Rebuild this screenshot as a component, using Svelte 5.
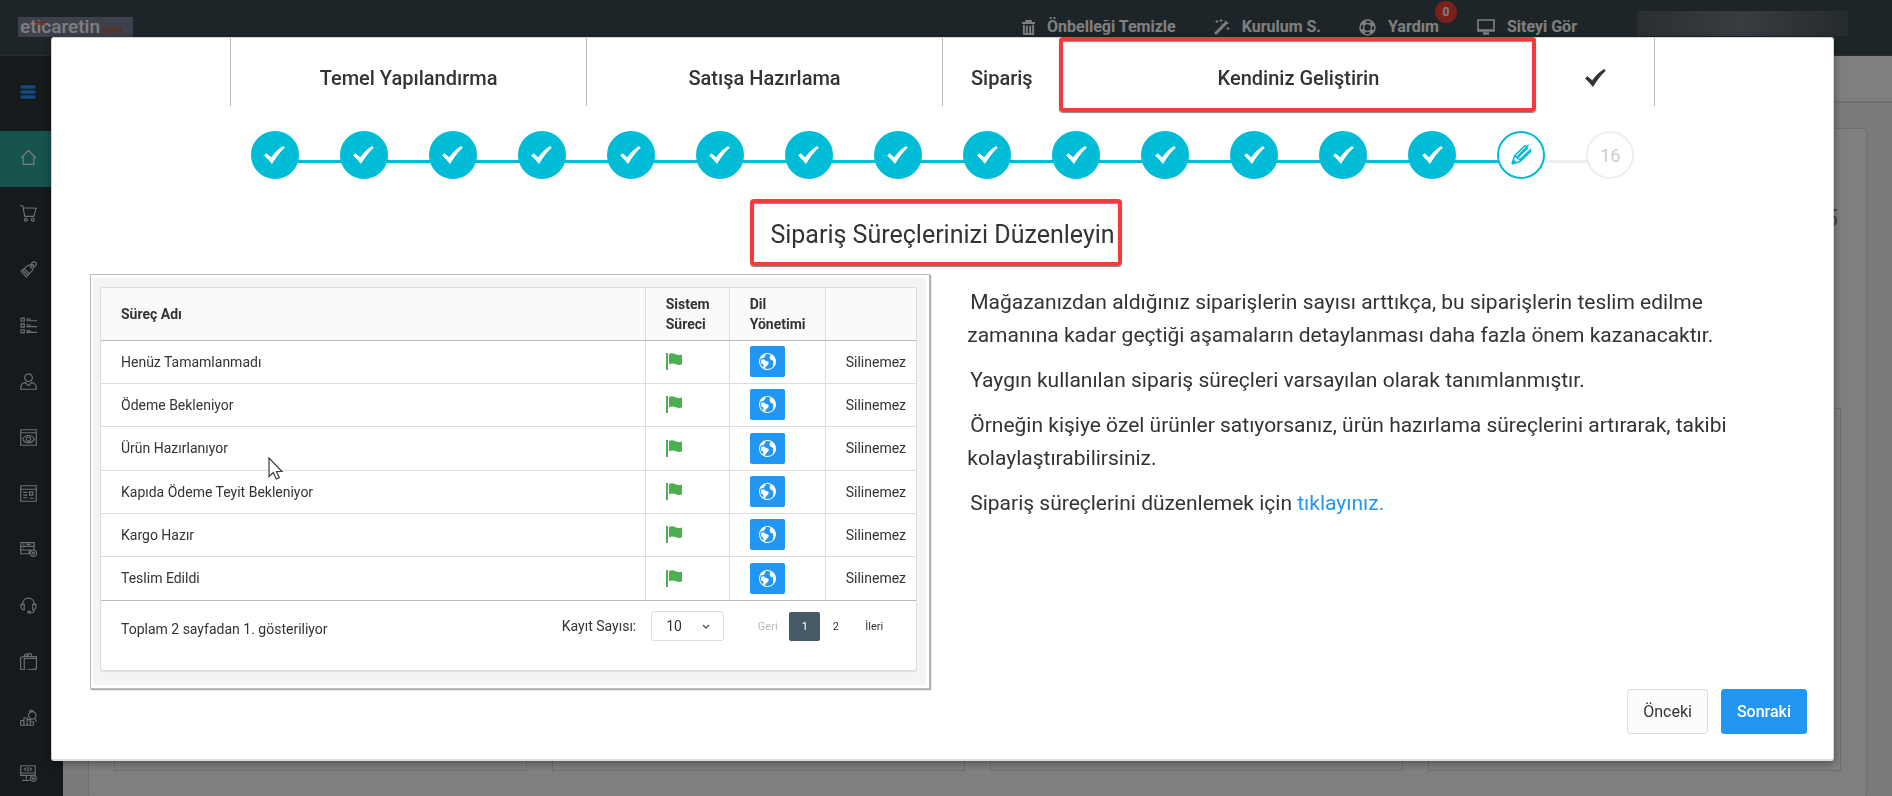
<script>
  const menu = [
    { label: 'Anasayfa', d: 'M1 8.500 8 1.500l7 7M3 7.500v7h10v-7' },
    { label: 'Siparişler', d: 'M0 .7h2.500l2 10H13l2.200-7.700-12-.4M5.500 12.500a1.300 1.300 0 1 0 .1 0M12 12.500a1.300 1.300 0 1 0 .1 0' },
    { label: 'Ürünler', d: 'M1 9.500 7.500 4l5-.5-.5 5L6 15zM2.500 8.500l5 5M4 7.200l5 5M10 6h.5v.5H10zM10.500 5.500C10 2 12 .5 14 1s2 3-1 5' },
    { label: 'Kategoriler', d: 'M1 1h3v3H1zM1 6.500h3v3H1zM1 12h3v3H1zM6 2h4M6 3.500h10M6 7.500h4M6 9h10M6 13h4M6 14.500h10' },
    { label: 'Müşteriler', d: 'M8 .8a3.600 3.600 0 1 0 .1 0M5 9c-3 0-4.300 2-4.300 6.300h14.600C15.300 11 14 9 11 9l-3 3z' },
    { label: 'Görünüm', d: 'M.7.7h14.600v14.600H.7zM.7 3.500h14.600M2.500 9.500C5 5 11 5 13.500 9.500 11 14 5 14 2.500 9.500M8 7.500a2 2 0 1 0 .1 0' },
    { label: 'İçerik', d: 'M.7.7h14.600v14.600H.7zM.7 4h14.600M3 7h4M3 9.500h4M3 12h4M9 6.500v3h3v-3zM9 12.500h4' },
    { label: 'Entegrasyon', d: 'M.7 1.500h12.600v3.500H.7zM.7 5h12.600v3.500H.7zM.7 8.500h8V12h-8zM3 3.200h1M6 3.200h4M3 6.800h1M12.500 8.500a3 3 0 1 0 .1 0M12.500 10.500a1 1 0 1 0 .1 0' },
    { label: 'Destek', d: 'M2.500 7C2.500-1 13.500-1 13.500 7M1 7h3v5H2.500L1 10zM12 7h3v3l-1.500 2H12zM13.500 12c0 2-2 3-4 3H7.500v-1.500h3' },
    { label: 'Mağaza', d: 'M.5 4.500 4 3l11.500.5V15L4 16.500.5 15zM4 5h11.500M4 5v11M4 4c0-4 4-4 4-.5M7 3c0-4 4-4 4 .5' },
    { label: 'Raporlar', d: 'M.7 15.300V11h3v4.300zM3.700 15.300V8.500h3v6.800M6.700 15V10h3v5M9.700 15v-3h3v3M.7 15.300h12M11.500 2.500a3.500 3.500 0 1 0 .1 0M8.500 2.500l2-1.500 2 1M14 9l1.500 3' },
    { label: 'Ayarlar', d: 'M.7.7h13.600v9H.7zM.7 7.500h13.600M6 2.500 4 4l2 1.500M9 2.500 11 4 9 5.500M7.800 2 7.200 6M6 10v3M2 14.500h7M12.500 10a2.700 2.700 0 1 0 .1 0M12.500 12a.8.8 0 1 0 .1 0' }
  ];

  const tabs = [
    { title: 'Temel Yapılandırma' },
    { title: 'Satışa Hazırlama' },
    { title: 'Sipariş' },
    { title: 'Kendiniz Geliştirin', marked: true },
    { title: '', done: true }
  ];

  const current = 15;
  const steps = Array.from({ length: 16 }, (_, i) => i + 1);

  const processes = [
    'Henüz Tamamlanmadı',
    'Ödeme Bekleniyor',
    'Ürün Hazırlanıyor',
    'Kapıda Ödeme Teyit Bekleniyor',
    'Kargo Hazır',
    'Teslim Edildi'
  ];

  let pageSize = '10';
</script>

<div class="page">
  <header class="navbar">
    <a class="logo" href="#home">
      eticaretin<small>.com</small>
      <svg width="10" height="4" viewBox="0 0 10 4" stroke="#e8602c" stroke-width="1.400" aria-hidden="true">
        <path d="M0 .7h10M1 0v4M3.700 0v4M6.400 0v4M9 0v4" />
      </svg>
    </a>
    <nav class="nav-links">
      <a href="#cache">
        <svg width="13" height="15" viewBox="0 0 14 16" fill="none" stroke="currentColor" stroke-width="2">
          <path d="M0 3.200h14M4.500 2.500V1h5v1.500M2 5v10h10V5M5.200 6v8M8.800 6v8" />
        </svg>
        Önbelleği Temizle
      </a>
      <a href="#setup">
        <svg width="16" height="16" viewBox="0 0 16 16" fill="none" stroke="currentColor">
          <path d="M1 15 13 3" stroke-width="3" />
          <path d="M11 1.500 14.500 5M3 1v3M1.500 2.500h3M7 0v3M5.500 1.500h3M14 8v3M12.500 9.500h3M7 5h1" stroke-width="1" />
        </svg>
        Kurulum S.
      </a>
      <a class="help" href="#help">
        <svg width="17" height="17" viewBox="0 0 17 17" fill="none" stroke="currentColor">
          <circle cx="8.500" cy="8.500" r="7.500" stroke-width="1.500" />
          <circle cx="8.500" cy="8.500" r="4" stroke-width="1.500" />
          <circle cx="8.500" cy="8.500" r="5.800" stroke-width="3" stroke-dasharray="4.500 4.600" stroke-dashoffset="-2.300" />
        </svg>
        Yardım
        <span class="badge">0</span>
      </a>
      <a href="#site">
        <svg width="18" height="16" viewBox="0 0 18 16" fill="none" stroke="currentColor" stroke-width="1.600">
          <path d="M1 1h16v11H1zM1 11h16" />
          <path d="M6 14.500h6" stroke-width="2.500" />
        </svg>
        Siteyi Gör
      </a>
    </nav>
    <div class="account"></div>
  </header>

  <div class="layout">
    <aside class="sidebar">
      <button class="toggle" aria-label="Menü">
        <svg width="16" height="14" viewBox="0 0 16 14" stroke="currentColor" stroke-width="3.600" stroke-linecap="round">
          <path d="M2 2h12M2 7h12M2 12h12" />
        </svg>
      </button>
      {#each menu as item, i}
        <a class="menu-item" class:active={i === 0} href="#menu-{i}" aria-label={item.label}>
          <svg width="17" height="17" viewBox="0 0 16 16" fill="none" stroke="currentColor" stroke-width="1.100">
            <path d={item.d} />
          </svg>
        </a>
      {/each}
    </aside>
    <main class="content">
      <div class="subheader"></div>
      <section class="board">
        <p class="count">5</p>
        <div class="panels">
          <div class="panel"></div>
          <div class="panel"></div>
          <div class="panel"></div>
          <div class="panel"></div>
        </div>
      </section>
    </main>
  </div>
</div>

{#snippet check()}
  <svg class="check" viewBox="0 0 21 18" fill="currentColor" stroke="currentColor" stroke-width=".8" stroke-linejoin="round" aria-hidden="true">
    <path d="M.5 9.500 2.400 7.700l4.900 4C10.500 7.200 14.500 3 19 .5l1.400 1.200C15.500 6 11.500 11.500 7.900 17.500 5.700 14.500 3 11.800.5 9.500z" />
  </svg>
{/snippet}

<div class="backdrop">
  <div class="modal" role="dialog" aria-modal="true" aria-labelledby="step-title">
    <div class="wizard">
      <div class="tabs">
        {#each tabs as tab}
          <div class="tab" class:marked={tab.marked}>
            {#if tab.done}{@render check()}{:else}{tab.title}{/if}
          </div>
        {/each}
      </div>
      <ol class="steps">
        {#each steps as step}
          <li class:done={step < current} class:current={step === current}>
            <span class="dot">
              {#if step < current}
                {@render check()}
              {:else if step === current}
                <svg width="20" height="20" viewBox="0 0 20 20" fill="none" stroke="currentColor" stroke-width="1.500">
                  <path d="M1 19 3.500 11 13.500 1h3L6 12M1 19l8-2.500L19.300 7V5L9 14.500M6.500 13 17 2.500M3.500 11l2.500 1 .5 1.500 2.500 1 0 2" />
                  <path d="M.5 19.500 2.500 14l3 3.200z" fill="currentColor" stroke="none" />
                </svg>
              {:else}
                {step}
              {/if}
            </span>
          </li>
        {/each}
      </ol>
    </div>

    <h2 id="step-title"><span>Sipariş Süreçlerinizi Düzenleyin</span></h2>

    <div class="body">
      <div class="preview">
        <div class="preview-inner">
          <div class="card">
            <table>
              <thead>
                <tr>
                  <th>Süreç Adı</th>
                  <th class="system">Sistem Süreci</th>
                  <th class="lang">Dil Yönetimi</th>
                  <th class="remove"></th>
                </tr>
              </thead>
              <tbody>
                {#each processes as process}
                  <tr>
                    <td>{process}</td>
                    <td>
                      <svg class="flag" width="17" height="17" viewBox="0 0 17 17" fill="#4caf50" aria-hidden="true">
                        <path d="M0 0h2v17H0zM3 1c2.500-1.200 4.500-.8 6.500.3 2 1 4 1 6.500.2v10c-2.500.8-4.500.6-6.500-.4-2-.9-4-1-6.500.1z" />
                      </svg>
                    </td>
                    <td>
                      <button class="globe" aria-label="Dil Yönetimi">
                        <svg width="17" height="17" viewBox="0 0 16 16" fill="#fff" aria-hidden="true">
                          <path d="M8 0c-4.418 0-8 3.582-8 8s3.582 8 8 8 8-3.582 8-8-3.582-8-8-8zM8 15c-.984 0-1.920-.203-2.769-.57l3.643-4.098c.081-.092.126-.21.126-.332v-1.500c0-.276-.224-.5-.5-.5-1.765 0-3.628-1.835-3.646-1.854-.094-.094-.221-.146-.354-.146h-2c-.276 0-.5.224-.5.5v3c0 .189.107.363.276.447l1.724.862v2.936c-1.813-1.265-3-3.366-3-5.745 0-1.074.242-2.091.674-3h1.826c.133 0 .26-.053.354-.146l2-2c.094-.094.146-.221.146-.354v-1.210c.634-.189 1.305-.29 2-.29 1.100 0 2.141.254 3.067.706-.065.055-.128.112-.188.172-.567.567-.879 1.320-.879 2.121s.312 1.555.879 2.121c.569.569 1.332.879 2.119.879.049 0 .099-.001.149-.004.216.809.605 2.917-.131 5.818-.007.027-.011.055-.013.081-1.271 1.298-3.042 2.104-5.002 2.104z" />
                        </svg>
                      </button>
                    </td>
                    <td>Silinemez</td>
                  </tr>
                {/each}
              </tbody>
            </table>
            <div class="table-footer">
              <span class="summary">Toplam 2 sayfadan 1. gösteriliyor</span>
              <label for="page-size">Kayıt Sayısı:</label>
              <div class="select">
                <select id="page-size" bind:value={pageSize}>
                  <option>10</option>
                  <option>25</option>
                  <option>50</option>
                </select>
                <svg width="8" height="6" viewBox="0 0 8 6" fill="none" stroke="#555" stroke-width="1.400">
                  <path d="M1 1l3 3 3-3" />
                </svg>
              </div>
              <div class="pager">
                <button class="prev" disabled>Geri</button>
                <button class="selected">1</button>
                <button>2</button>
                <button class="next">İleri</button>
              </div>
            </div>
          </div>
        </div>
        <svg class="cursor" width="16" height="24" viewBox="0 0 16 24" fill="#fff" stroke="#3c3c46" stroke-width="1.200">
          <path d="M1 1v18.500l4.300-4 3 6.500 3-1.300L8.500 14.500H14z" />
        </svg>
      </div>

      <div class="text">
        <p>Mağazanızdan aldığınız siparişlerin sayısı arttıkça, bu siparişlerin teslim edilme zamanına kadar geçtiği aşamaların detaylanması daha fazla önem kazanacaktır.</p>
        <p>Yaygın kullanılan sipariş süreçleri varsayılan olarak tanımlanmıştır.</p>
        <p>Örneğin kişiye özel ürünler satıyorsanız, ürün hazırlama süreçlerini artırarak, takibi kolaylaştırabilirsiniz.</p>
        <p>Sipariş süreçlerini düzenlemek için <a href="#edit">tıklayınız.</a></p>
      </div>
    </div>

    <div class="actions">
      <button class="btn">Önceki</button>
      <button class="btn primary">Sonraki</button>
    </div>
  </div>
</div>

<style>
  :global(body) {
    margin: 0;
    font-family: Roboto, "Liberation Sans", sans-serif;
    color: #333;
    overflow: hidden;
  }

  :global(*) {
    box-sizing: border-box;
  }

  button,
  select {
    font-family: inherit;
  }

  .page {
    height: 100vh;
    display: flex;
    flex-direction: column;
    overflow: hidden;
  }

  .navbar {
    flex: none;
    height: 56px;
    display: flex;
    align-items: flex-start;
    padding: 0 44px 0 18px;
    background: #3c4a50;
    border-bottom: 1px solid #505a60;
  }

  .logo {
    position: relative;
    margin-top: 17px;
    width: 115px;
    padding-left: 2px;
    line-height: 20px;
    font-size: 19px;
    font-weight: 500;
    color: #fff;
    background: #7a8298;
    text-decoration: none;
    white-space: nowrap;
  }

  .logo small {
    font-size: 10px;
    line-height: 10px;
    color: #d8502c;
  }

  .logo svg {
    position: absolute;
    left: 17px;
    top: 4px;
  }

  .nav-links {
    display: flex;
    gap: 38px;
    margin: 17px 60px 0 auto;
  }

  .nav-links a {
    position: relative;
    display: flex;
    align-items: center;
    gap: 12px;
    line-height: 20px;
    font-size: 16px;
    font-weight: 700;
    color: #fff;
    text-decoration: none;
  }

  .badge {
    position: absolute;
    top: -16px;
    right: -18px;
    width: 22px;
    height: 22px;
    border-radius: 50%;
    background: #f44336;
    font-size: 12px;
    line-height: 22px;
    text-align: center;
  }

  .account {
    margin-top: 11px;
    width: 211px;
    height: 25px;
    background: linear-gradient(90deg, #555e64, #727880 50%, #4b565c);
  }

  .layout {
    flex: 1;
    min-height: 0;
    display: flex;
  }

  .sidebar {
    flex: none;
    width: 63px;
    background: #2a343a;
    overflow: hidden;
  }

  .toggle {
    display: flex;
    width: 100%;
    height: 75px;
    padding: 0 0 4px 20px;
    align-items: center;
    background: none;
    border: none;
    color: #2892ff;
  }

  .menu-item {
    display: flex;
    align-items: center;
    height: 56px;
    padding: 0 0 4px 20px;
    color: #e0e0e0;
  }

  .menu-item.active {
    background: #2fa89b;
    color: #fff;
  }

  .content {
    flex: 1;
    background: #f5f5f5;
    overflow: hidden;
  }

  .subheader {
    height: 47px;
    background: #fff;
    border-bottom: 2px solid #dcdcdc;
  }

  .board {
    margin: 25px 25px 0;
    padding: 73px 25px 25px;
    background: #fff;
    border: 1px solid #ddd;
    border-radius: 3px;
  }

  .count {
    margin: 0 0 174px;
    padding-right: 3px;
    text-align: right;
    font-size: 24px;
    line-height: 32px;
    color: #888;
  }

  .panels {
    display: grid;
    grid-template-columns: repeat(4, 1fr);
    gap: 25px;
  }

  .panel {
    height: 363px;
    border: 1px solid #ddd;
  }

  .backdrop {
    position: fixed;
    inset: 0;
    padding: 37px 58px 36px 51px;
    background: rgba(0, 0, 0, 0.5);
    overflow: hidden;
  }

  .modal {
    background: #fff;
    border: 1px solid #d4d4d4;
    border-bottom: 2px solid #ddd;
    border-radius: 3px;
    box-shadow: 0 2px 8px rgba(0, 0, 0, 0.4);
  }

  .wizard {
    padding: 0 10%;
  }

  .tabs {
    display: grid;
    grid-template-columns: 3fr 3fr minmax(0, 1fr) 4fr 1fr;
    height: 68px;
    border-left: 1px solid #bbb;
  }

  .tab {
    position: relative;
    display: flex;
    align-items: center;
    justify-content: center;
    padding-top: 12px;
    border-right: 1px solid #bbb;
    font-size: 20px;
    font-weight: 500;
  }

  .marked::after,
  h2 span::after {
    content: '';
    position: absolute;
    border: 4px solid #f43b3b;
    border-radius: 4px;
    box-shadow: 0 1px 1px #888, inset 0 1px 1px #888;
  }

  .marked::after {
    inset: -1px -1px -6px -3px;
  }

  .check {
    width: 21px;
    height: 18px;
  }

  .steps {
    display: grid;
    grid-template-columns: repeat(16, 1fr);
    margin: 0;
    padding: 25px 0 0;
    list-style: none;
  }

  .steps li {
    position: relative;
    display: flex;
    justify-content: center;
  }

  .steps li::before,
  .steps li::after {
    content: '';
    position: absolute;
    top: 29px;
    height: 3px;
    width: 50%;
    background: #eee;
  }

  .steps li::before {
    left: 0;
  }

  .steps li::after {
    right: 0;
  }

  .steps li.done::before,
  .steps li.done::after,
  .steps li.current::before {
    background: #00bcd7;
  }

  .steps li:first-child::before,
  .steps li:last-child::after {
    display: none;
  }

  .dot {
    z-index: 1;
    display: flex;
    align-items: center;
    justify-content: center;
    width: 48px;
    height: 48px;
    border: 2px solid #eee;
    border-radius: 50%;
    background: #fff;
    font-size: 18px;
    color: #ccc;
  }

  .done .dot {
    border-color: #00bcd7;
    background: #00bcd7;
    color: #fff;
  }

  .current .dot {
    border-color: #00bcd7;
    color: #00bcd7;
  }

  h2 {
    margin: 36px 0 19px;
    text-align: center;
    font-size: 25px;
    font-weight: 400;
    line-height: 40px;
  }

  h2 span {
    position: relative;
    display: inline-block;
  }

  h2 span::after {
    inset: -16px -7px -11px -20px;
  }

  .body {
    display: grid;
    grid-template-columns: 51fr 50fr;
    gap: 37px;
    padding: 0 42px 0 38px;
  }

  .preview {
    position: relative;
    padding: 3px;
    border: 1px solid #bbb;
    box-shadow: 1px 1px 1px #aaa;
  }

  .preview-inner {
    padding: 9px 9px 14px 6px;
    background: #f4f4f4;
  }

  .card {
    background: #fff;
    border: 1px solid #ddd;
    border-radius: 3px;
    box-shadow: 0 1px 1px #ddd;
    font-size: 14px;
  }

  table {
    width: 100%;
    table-layout: fixed;
    border-collapse: collapse;
  }

  th,
  td {
    height: 43px;
    padding: 0 20px;
    text-align: left;
    border-bottom: 1px solid #ddd;
    border-left: 1px solid #ddd;
  }

  th:first-child,
  td:first-child {
    border-left: none;
  }

  th {
    height: 52px;
    background: #f9fafc;
    border-bottom-color: #bbb;
    font-weight: 700;
    line-height: 20px;
  }

  td {
    line-height: 20px;
    white-space: nowrap;
    overflow: visible;
  }

  tbody tr:nth-child(3n) td {
    height: 44px;
  }

  tbody tr:last-child td {
    border-bottom-color: #bbb;
  }

  .system {
    width: 84px;
  }

  .lang {
    width: 96px;
  }

  .remove {
    width: 91px;
  }

  .flag {
    display: block;
  }

  .globe {
    display: flex;
    align-items: center;
    justify-content: center;
    width: 35px;
    height: 31px;
    padding: 0;
    border: none;
    border-radius: 2px;
    background: #2196f3;
  }

  .table-footer {
    display: flex;
    align-items: center;
    height: 69px;
    padding: 0 19px 18px 20px;
  }

  .summary {
    flex: 1;
    padding-top: 6px;
  }

  .select {
    position: relative;
    margin: 0 27px 0 15px;
  }

  .select select {
    appearance: none;
    display: block;
    width: 73px;
    height: 30px;
    padding: 0 14px;
    border: 1px solid #ddd;
    border-radius: 3px;
    background: #fff;
    color: #333;
    font-size: 14px;
  }

  .select svg {
    position: absolute;
    right: 14px;
    top: 13px;
  }

  .pager {
    display: flex;
  }

  .pager button {
    width: 31px;
    height: 29px;
    padding: 0;
    border: none;
    border-radius: 2px;
    background: none;
    color: #333;
    font-size: 11px;
  }

  .pager .prev {
    width: 38px;
    padding-right: 5px;
    color: #bbb;
  }

  .pager .next {
    width: 46px;
  }

  .pager .selected {
    background: #455a64;
    color: #fff;
  }

  .cursor {
    position: absolute;
    left: 177px;
    top: 182px;
  }

  .text {
    padding-top: 12px;
    font-size: 21px;
    line-height: 33px;
  }

  .text p {
    margin: 0 0 12px;
    text-indent: 3px;
  }

  .text a {
    color: #2196f3;
    text-decoration: none;
  }

  .actions {
    display: flex;
    justify-content: flex-end;
    gap: 13px;
    padding: 0 26px 25px;
  }

  .btn {
    height: 45px;
    padding: 0 15px;
    border: 1px solid #ddd;
    border-radius: 3px;
    background: #fcfcfc;
    color: #333;
    font-size: 16px;
  }

  .primary {
    border-color: #2196f3;
    background: #2196f3;
    color: #fff;
    font-weight: 500;
  }
</style>
